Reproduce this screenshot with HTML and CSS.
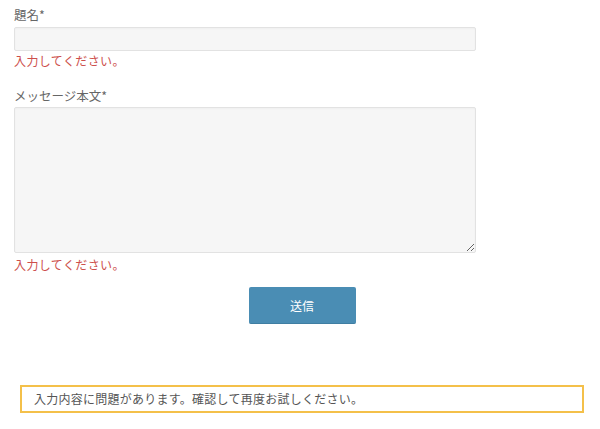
FILE: index.html
```html
<!DOCTYPE html>
<html lang="ja">
<head>
<meta charset="utf-8">
<link rel="stylesheet" href="styles.css">
</head>
<body>
<form class="form">
  <div class="field">
    <label class="label">題名*</label>
    <input class="input" type="text">
    <span class="tip">入力してください。</span>
  </div>
  <div class="field field-msg">
    <label class="label">メッセージ本文*</label>
    <textarea class="textarea"></textarea>
    <span class="tip">入力してください。</span>
  </div>
  <div class="actions">
    <button type="button" class="submit">送信</button>
  </div>
  <div class="alert">入力内容に問題があります。確認して再度お試しください。</div>
</form>
</body>
</html>
```
FILE: styles.css
```css
html, body {
  margin: 0;
  padding: 0;
  background: #fff;
}
body {
  font-family: "Noto Sans CJK JP", "Noto Sans", sans-serif;
  color: #555;
  font-size: 12px;
}
.form {
  padding: 6px 0 0 0;
}
.field {
  display: flex;
  flex-direction: column;
  width: 462px;
  margin-left: 14px;
}
.field-msg {
  margin-top: 17px;
}
.label {
  font-size: 12.5px;
  line-height: 18px;
  color: #666;
}
.input {
  box-sizing: border-box;
  height: 24px;
  margin: 3px 0 0 0;
  background: #f6f6f6;
  border: 1px solid #e2e2e2;
  border-radius: 2px;
  box-shadow: inset 0 1px 2px rgba(0,0,0,0.03);
  padding: 0 6px;
  font: inherit;
}
.textarea {
  box-sizing: border-box;
  height: 146px;
  margin: 2px 0 0 0;
  background: #f6f6f6;
  border: 1px solid #e2e2e2;
  border-radius: 2px;
  box-shadow: inset 0 1px 2px rgba(0,0,0,0.03);
  resize: vertical;
  font: inherit;
}
.tip {
  display: block;
  margin-top: 1px;
  color: #cd4f4c;
  font-size: 12px;
  line-height: 18px;
  letter-spacing: 0.4px;
}
.field-msg .tip {
  margin-top: 3px;
}
.actions {
  display: flex;
  justify-content: center;
  margin: 13px 16px 0 20px;
}
.submit {
  width: 107px;
  height: 37px;
  background: #4a8db4;
  color: #fff;
  border: none;
  border-bottom: 1px solid #3f7ea2;
  border-radius: 2px;
  font-family: inherit;
  font-size: 12px;
  padding: 0;
}
.alert {
  box-sizing: border-box;
  margin: 61px 16px 0 20px;
  height: 28px;
  border: 2px solid #f4c04a;
  padding: 0 12px;
  font-size: 12px;
  line-height: 24px;
  letter-spacing: 0.25px;
  color: #555;
}
```
